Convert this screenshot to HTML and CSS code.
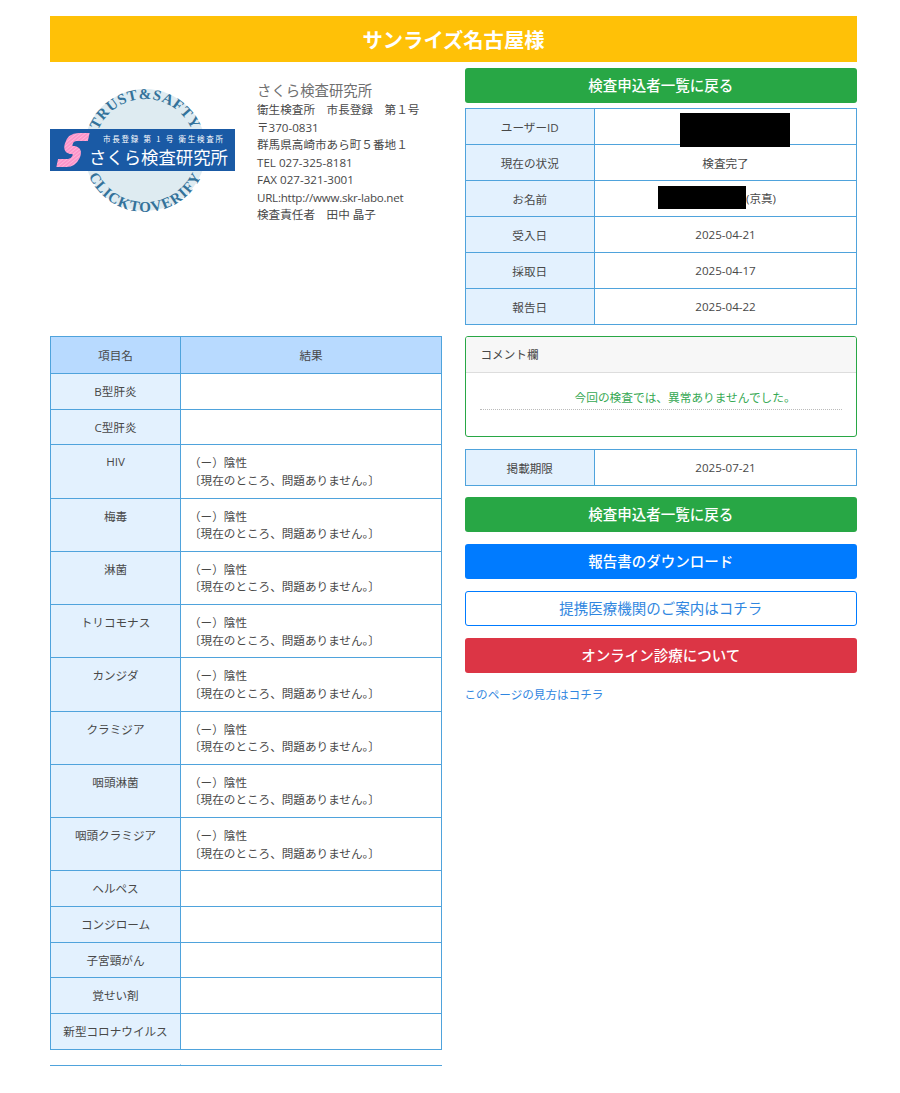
FILE: index.html
```html
<!DOCTYPE html>
<html lang="ja">
<head>
<meta charset="utf-8">
<title>サンライズ名古屋様</title>
<link rel="stylesheet" href="styles.css">
</head>
<body>
<main class="page">
  <h1 class="banner">サンライズ名古屋様</h1>
  <div class="columns">
    <section class="left">
      <div class="lab">
        <svg class="logo" viewBox="0 0 186 134" width="186" height="134" role="img" aria-label="さくら検査研究所">
          <defs>
            <path id="arcTop" d="M44 66 A51 51 0 0 1 146 66"/>
            <path id="arcBottom" d="M33 66 A62 62 0 0 0 157 66"/>
            <pattern id="hatch" width="3" height="3" patternUnits="userSpaceOnUse" patternTransform="rotate(45)">
              <rect width="3" height="3" fill="#fb93c9"/>
              <rect width="1" height="3" fill="#fdb4d8"/>
            </pattern>
          </defs>
          <circle cx="95" cy="66" r="61" fill="#deebf1"/>
          <text class="arc-text"><textPath href="#arcTop" startOffset="50%" text-anchor="middle">TRUST&amp;SAFTY</textPath></text>
          <text class="arc-text arc-wide"><textPath href="#arcBottom" startOffset="50%" text-anchor="middle">CLICKTOVERIFY</textPath></text>
          <rect x="0" y="45" width="185" height="42" fill="#1a5aa5"/>
          <path d="M36 53 H25 Q18 53 17.5 60 Q17 66 23 66 Q29 67 27.5 73 Q26 79 20 79 H10" transform="translate(14 0) skewX(-12)" fill="none" stroke="url(#hatch)" stroke-width="8"/>
          <text class="bar-small" x="53" y="58" textLength="120" lengthAdjust="spacing">市長登録 第 1 号 衛生検査所</text>
          <text class="bar-large" x="39" y="80" textLength="139" lengthAdjust="spacingAndGlyphs">さくら検査研究所</text>
        </svg>
        <address class="lab-info">
          <p class="lab-name">さくら検査研究所</p>
          <p>衛生検査所　市長登録　第１号</p>
          <p>〒370-0831</p>
          <p>群馬県高崎市あら町５番地１</p>
          <p>TEL 027-325-8181</p>
          <p>FAX 027-321-3001</p>
          <p class="url">URL:http://www.skr-labo.net</p>
          <p>検査責任者　田中 晶子</p>
        </address>
      </div>
      <table class="grid results">
        <thead>
          <tr><th class="col-name">項目名</th><th>結果</th></tr>
        </thead>
        <tbody>
          <tr><th>B型肝炎</th><td></td></tr>
          <tr><th>C型肝炎</th><td></td></tr>
          <tr><th>HIV</th><td>（ー）陰性<br>〔現在のところ、問題ありません。〕</td></tr>
          <tr><th>梅毒</th><td>（ー）陰性<br>〔現在のところ、問題ありません。〕</td></tr>
          <tr><th>淋菌</th><td>（ー）陰性<br>〔現在のところ、問題ありません。〕</td></tr>
          <tr><th>トリコモナス</th><td>（ー）陰性<br>〔現在のところ、問題ありません。〕</td></tr>
          <tr><th>カンジダ</th><td>（ー）陰性<br>〔現在のところ、問題ありません。〕</td></tr>
          <tr><th>クラミジア</th><td>（ー）陰性<br>〔現在のところ、問題ありません。〕</td></tr>
          <tr><th>咽頭淋菌</th><td>（ー）陰性<br>〔現在のところ、問題ありません。〕</td></tr>
          <tr><th>咽頭クラミジア</th><td>（ー）陰性<br>〔現在のところ、問題ありません。〕</td></tr>
          <tr><th>ヘルペス</th><td></td></tr>
          <tr><th>コンジローム</th><td></td></tr>
          <tr><th>子宮頸がん</th><td></td></tr>
          <tr><th>覚せい剤</th><td></td></tr>
          <tr><th>新型コロナウイルス</th><td></td></tr>
        </tbody>
      </table>
      <div class="table-end"><span class="table-end-tick"></span></div>
    </section>
    <section class="right">
      <a class="btn btn-green" href="#">検査申込者一覧に戻る</a>
      <table class="grid info">
        <tbody>
          <tr><th class="col-label">ユーザーID</th><td class="id-cell"><span class="redact redact-id"></span></td></tr>
          <tr><th>現在の状況</th><td>検査完了</td></tr>
          <tr><th>お名前</th><td class="name-cell"><span class="redact redact-name"></span>(京真)</td></tr>
          <tr><th>受入日</th><td>2025-04-21</td></tr>
          <tr><th>採取日</th><td>2025-04-17</td></tr>
          <tr><th>報告日</th><td>2025-04-22</td></tr>
        </tbody>
      </table>
      <div class="comment">
        <div class="comment-head">コメント欄</div>
        <div class="comment-body"><p class="comment-text">今回の検査では、異常ありませんでした。</p></div>
      </div>
      <table class="grid info term">
        <tbody>
          <tr><th class="col-label">掲載期限</th><td>2025-07-21</td></tr>
        </tbody>
      </table>
      <div class="actions">
        <a class="btn btn-green" href="#">検査申込者一覧に戻る</a>
        <a class="btn btn-blue" href="#">報告書のダウンロード</a>
        <a class="btn btn-outline" href="#">提携医療機関のご案内はコチラ</a>
        <a class="btn btn-red" href="#">オンライン診療について</a>
      </div>
      <a class="help" href="#">このページの見方はコチラ</a>
    </section>
  </div>
</main>
</body>
</html>
```
FILE: styles.css
```css
* { box-sizing: border-box; }
html, body { margin: 0; background: #fff; }
body {
  font-family: "Open Sans", "Noto Sans CJK JP", sans-serif;
  font-size: 11.6px;
  color: #484848;
}
.page { width: 807px; margin: 16px 0 0 50px; }
.banner {
  margin: 0;
  height: 46px;
  padding-top: 3px;
  line-height: 43px;
  background: #ffc107;
  color: #fff;
  font-size: 20.3px;
  font-weight: 700;
  text-align: center;
}
.columns {
  display: grid;
  grid-template-columns: 392px 392.5px;
  column-gap: 22.5px;
  margin-top: 6px;
}
.lab { display: flex; height: 268px; padding-top: 16px; }
.logo { flex: none; display: block; }
.arc-text { font-family: "Liberation Serif", serif; font-size: 15px; font-weight: 700; fill: #33729a; letter-spacing: 0.7px; }
.arc-wide { letter-spacing: 1px; }
.bar-small { font-family: "Noto Sans CJK JP", sans-serif; font-size: 7.5px; fill: #fff; }
.bar-large { font-family: "Noto Sans CJK JP", sans-serif; font-size: 17.4px; fill: #fff; }
.lab-info {
  margin: -3px 0 0 21px;
  font-style: normal;
  font-size: 11.6px;
  line-height: 17.5px;
  align-self: flex-start;
}
.lab-info p { margin: 0; white-space: nowrap; }
.lab-info .lab-name { font-size: 14.4px; color: #6f6f6f; line-height: 20px; }
.lab-info .url { letter-spacing: -0.25px; }
.grid { width: 100%; border-collapse: collapse; table-layout: fixed; background: #fff; }
.grid th, .grid td {
  border: 1px solid #4fa3dc;
  font-weight: 400;
  text-align: center;
  vertical-align: middle;
  height: 36px;
  padding: 0;
}
.grid tbody th { background: #e3f1fe; }
.col-name { width: 130px; }
.col-label { width: 129.5px; }
.results thead th { background: #b8daff; height: 37px; }
.results tbody th { vertical-align: top; padding-top: 9px; }
.results tbody th, .results tbody td { height: 35.7px; }
.results td { text-align: left; padding: 9px 9px 8.25px 8px; line-height: 17.5px; }
.table-end { margin-top: 14px; height: 2px; border-bottom: 1px solid #4fa3dc; }
.table-end-tick { display: block; width: 1px; height: 1px; margin-left: 130px; background: #a9d2ee; }
.btn {
  display: block;
  height: 35px;
  line-height: 35px;
  border-radius: 3px;
  color: #fff;
  font-size: 14.5px;
  font-weight: 500;
  text-align: center;
  text-decoration: none;
}
.btn-green { background: #28a745; }
.btn-blue { background: #007bff; }
.btn-red { background: #dc3545; }
.btn-outline { background: #fff; border: 1px solid #007bff; color: #2f86e0; line-height: 33px; font-weight: 400; }
.info { margin-top: 5px; }
.id-cell { padding-left: 18px !important; }
.name-cell { padding-right: 17px !important; padding-top: 2px !important; }
.redact { display: inline-block; position: relative; background: #000; vertical-align: middle; }
.redact-id { width: 110px; height: 34px; top: 3px; }
.redact-name { width: 88px; height: 23px; top: -2px; }
.comment {
  margin-top: 11px;
  height: 101px;
  border: 1px solid #28a745;
  border-radius: 3px;
  overflow: hidden;
}
.comment-head {
  height: 36px;
  line-height: 36px;
  padding-left: 15px;
  background: #f7f7f7;
  border-bottom: 1px solid #ddd;
}
.comment-body { padding: 15px 14px 0; }
.comment-text {
  margin: 0;
  height: 22px;
  padding-left: 95px;
  border-bottom: 1px dotted #bbb;
  color: #35a853;
  line-height: 18px;
  font-size: 11.7px;
}
.term { margin-top: 12px; }
.actions { display: flex; flex-direction: column; gap: 12px; margin-top: 11px; }
.help {
  display: block;
  margin-top: 13px;
  color: #2f86e0;
  line-height: 18px;
  text-decoration: none;
}
```
